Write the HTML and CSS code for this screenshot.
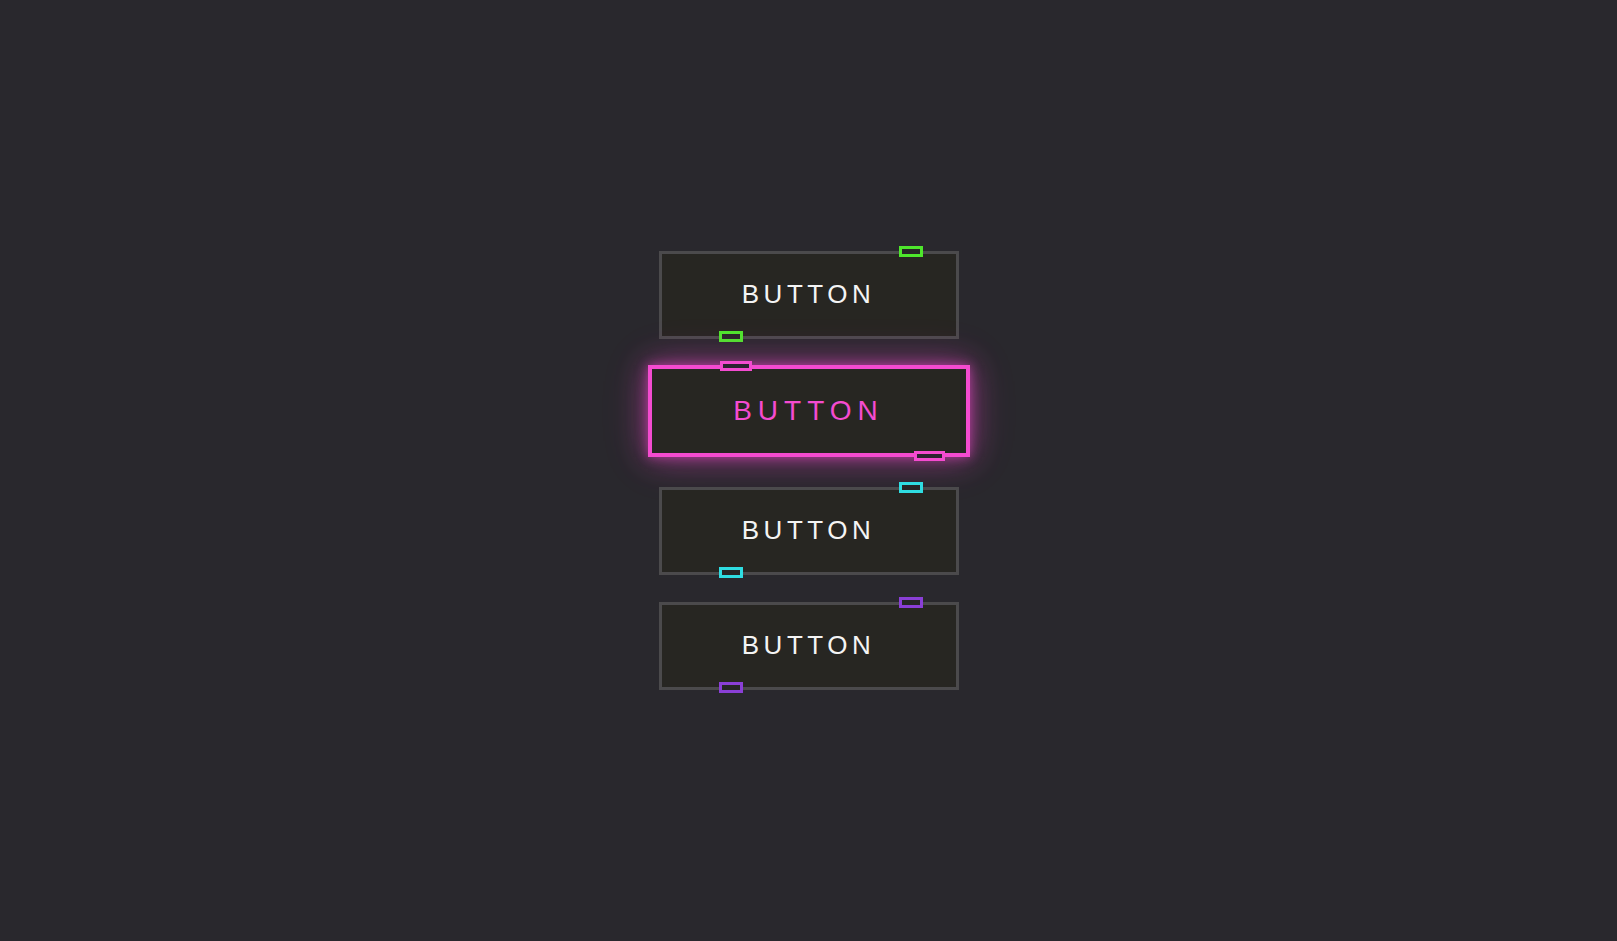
FILE: index.html
```html
<!DOCTYPE html>
<html lang="en">
<head>
    <meta charset="UTF-8">
    <meta name="viewport" content="width=device-width, initial-scale=1.0">
    <title>Neon Buttons</title>
    <link rel="stylesheet" href="styles.css">
</head>
<body>

    <div class="stack">
        <button class="neon-btn green">Button</button>
        <button class="neon-btn pink active">Button</button>
        <button class="neon-btn cyan">Button</button>
        <button class="neon-btn purple">Button</button>
    </div>

</body>
</html>
```

FILE: styles.css
```css
body {
    font-family: "Liberation Sans", Arial, sans-serif;
    background-color: #29282d;
    margin: 0;
    padding: 0;
    height: 100vh;
    display: flex;
    justify-content: center;
    align-items: center;
}

.stack {
    display: flex;
    flex-direction: column;
    align-items: center;
    gap: 27px;
}

.neon-btn {
    position: relative;
    box-sizing: border-box;
    width: 300px;
    height: 88px;
    background-color: #272622;
    border: 3px solid #4b4a4c;
    color: #f4f4f4;
    font-family: inherit;
    font-size: 26px;
    letter-spacing: 4.5px;
    text-transform: uppercase;
    cursor: pointer;
    padding: 0 0 1px;
}

.neon-btn::before,
.neon-btn::after {
    content: "";
    position: absolute;
    box-sizing: border-box;
    width: 24px;
    height: 11px;
    border: 3px solid var(--neon);
    background-color: #262626;
}

.neon-btn::before {
    top: -8px;
    right: 33px;
}

.neon-btn::after {
    bottom: -6px;
    left: 57px;
}

.green { --neon: #4ee62c; }
.pink { --neon: #f44bd0; }
.cyan { --neon: #2fdde2; }
.purple { --neon: #8a3fd6; }

.neon-btn.active {
    width: 322px;
    height: 92px;
    margin: -1px 0 3px;
    border: 4px solid var(--neon);
    color: var(--neon);
    font-size: 28px;
    letter-spacing: 6px;
    padding: 0;
    box-shadow: 0 0 10px rgba(244, 75, 208, 0.5), 0 0 28px rgba(244, 75, 208, 0.45), 0 0 48px rgba(244, 75, 208, 0.2);
}

.neon-btn.active::before {
    right: auto;
    left: 68px;
    width: 32px;
    height: 10px;
    top: -8px;
    background-color: #2c2230;
}

.neon-btn.active::after {
    left: auto;
    right: 21px;
    width: 31px;
    height: 10px;
    bottom: -8px;
    background-color: #2c2230;
}
```
